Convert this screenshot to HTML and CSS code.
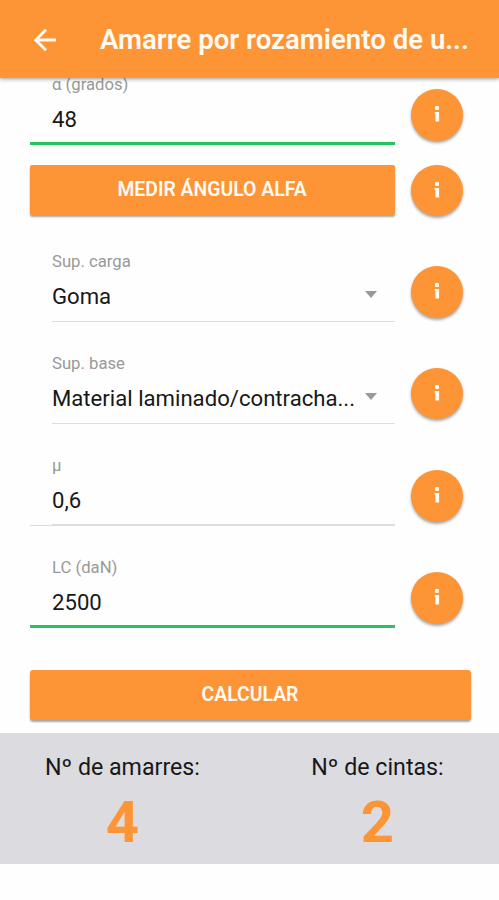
FILE: index.html
```html
<!DOCTYPE html>
<html lang="es">
<head>
<meta charset="utf-8">
<title>Amarre por rozamiento</title>
<link rel="stylesheet" href="styles.css">
</head>
<body>
<svg width="0" height="0" class="defs">
  <symbol id="info" viewBox="0 0 10 18"><rect x="3" y="1" width="4" height="4" rx="1"/><path d="M2.7 7H7.1v9.5H3.4V9H2.7z"/></symbol>
</svg>
<header class="toolbar">
  <svg class="back" viewBox="0 0 24 24"><path d="M23 12H2.5M13 1.7L2.7 12 13 22.3"/></svg>
  <h1 class="title">Amarre por rozamiento de u...</h1>
</header>
<main class="form">
  <div class="row row-first">
    <label class="field valid"><span class="label">α (grados)</span><span class="value">48</span></label>
    <button class="info"><svg><use href="#info"/></svg></button>
  </div>
  <div class="row row-action">
    <button class="btn">MEDIR ÁNGULO ALFA</button>
    <button class="info"><svg><use href="#info"/></svg></button>
  </div>
  <div class="row">
    <label class="field select"><span class="label">Sup. carga</span><span class="value">Goma</span></label>
    <button class="info"><svg><use href="#info"/></svg></button>
  </div>
  <div class="row row-base">
    <label class="field select"><span class="label">Sup. base</span><span class="value">Material laminado/contracha...</span></label>
    <button class="info"><svg><use href="#info"/></svg></button>
  </div>
  <div class="row row-mu">
    <label class="field double"><span class="label">μ</span><span class="value">0,6</span></label>
    <button class="info"><svg><use href="#info"/></svg></button>
  </div>
  <div class="row row-last">
    <label class="field valid"><span class="label">LC (daN)</span><span class="value">2500</span></label>
    <button class="info"><svg><use href="#info"/></svg></button>
  </div>
  <button class="btn btn-wide">CALCULAR</button>
</main>
<footer class="results">
  <div class="result"><span class="result-label">Nº de amarres:</span><strong class="number">4</strong></div>
  <div class="result"><span class="result-label">Nº de cintas:</span><strong class="number">2</strong></div>
</footer>
</body>
</html>
```
FILE: styles.css
```css
* { box-sizing: border-box; }
body { margin: 0; height: 900px; overflow: hidden; background: #fefefe; color: #181818; font-family: Roboto, "Liberation Sans", sans-serif; }
.defs { display: block; }
button { border: 0; padding: 0; font-family: inherit; color: #fffaf2; background: #fd9436; }
.toolbar { position: relative; z-index: 1; display: flex; align-items: center; height: 78px; padding: 2px 20px 0 33px; background: #fd9436; box-shadow: 0 1px 4px rgba(0,0,0,.4); }
.back { width: 24px; height: 24px; flex: none; margin: -1px 43px 0 0; fill: none; stroke: #fffaf2; stroke-width: 2.9; }
.title { margin: 0; font-size: 27.6px; line-height: 36px; font-weight: 600; color: #fffaf2; white-space: nowrap; }
.form { padding: 0 28px 0 29.5px; }
.row { display: grid; grid-template-columns: 365px 52px; column-gap: 16.5px; height: 72px; margin-bottom: 29.5px; }
.row-first { margin-top: -5px; margin-bottom: 20px; }
.row-action { height: 50px; margin-bottom: 35px; }
.row-base { margin-bottom: 30.5px; }
.row-mu { margin-bottom: 30px; }
.row-last { margin-bottom: 42px; }
.field { display: flex; flex-direction: column; position: relative; padding-left: 22.5px; }
.label { font-size: 16.7px; line-height: 24px; color: #999; }
.value { margin-top: 8px; font-size: 22.15px; line-height: 28px; white-space: nowrap; }
.valid { border-bottom: 3px solid #26c461; }
.select { margin-left: 22.5px; padding-left: 0; border-bottom: 1px solid #dedede; }
.select::after { content: ""; position: absolute; right: 18px; top: 41px; border: 6.5px solid transparent; border-top: 7px solid #999; border-bottom: 0; }
.double { border-bottom: 1px solid #dcdcdc; }
.double::after { content: ""; position: absolute; left: 22.5px; right: 0; bottom: 0; height: 1.5px; background: #dedede; }
.info { display: flex; justify-content: center; align-items: center; width: 52px; height: 51.5px; margin-top: 16px; border-radius: 50%; box-shadow: 0 2px 3px rgba(0,0,0,.35); }
.info svg { width: 10px; height: 18px; margin-top: -1px; fill: #fffaf2; }
.row-action .info { margin-top: -.5px; }
.btn { height: 50px; padding-bottom: 1px; border-radius: 2px; box-shadow: 0 2px 2px rgba(0,0,0,.35); font-size: 19.4px; font-weight: 600; }
.btn-wide { display: block; width: 441px; border-radius: 3px; }
.results { display: grid; grid-template-columns: 245px 265px; height: 131px; margin-top: 13px; padding-top: 20px; background: #dcdbdf; }
.result { display: flex; flex-direction: column; align-items: center; }
.result-label { font-size: 23.2px; line-height: 28px; }
.number { margin-top: 8px; font-size: 58px; line-height: 66px; color: #fd9436; font-weight: 700; }
```
